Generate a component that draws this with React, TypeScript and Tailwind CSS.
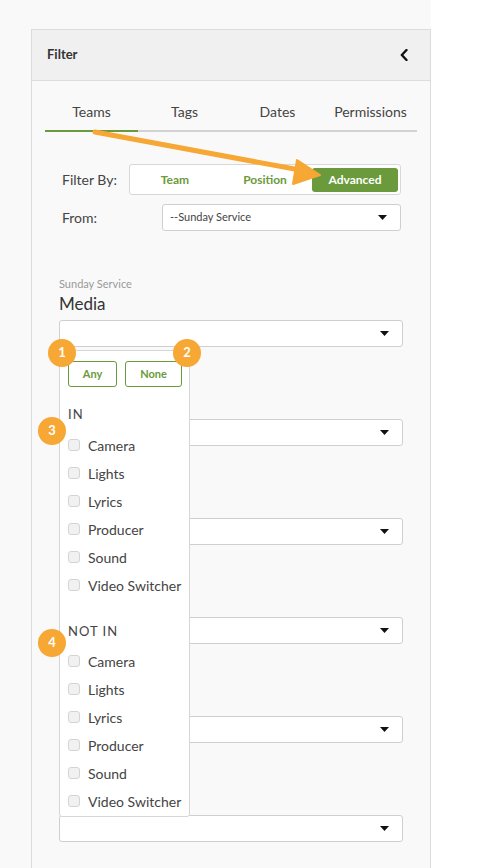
import React from "react";

function Caret() {
  return (
    <svg width="9" height="5" viewBox="0 0 9 5" className="shrink-0">
      <path d="M0 0 L9 0 L4.5 5 Z" fill="#111" />
    </svg>
  );
}

function Select({ text }: { text?: string }) {
  return (
    <div className="flex h-[27px] items-center justify-between rounded-[3px] border border-[#cfcfcf] bg-white pl-[7px] pr-[13px]">
      <span className="text-[11px] text-[#444]">{text ?? ""}</span>
      <Caret />
    </div>
  );
}

function Badge({ n, className }: { n: number; className: string }) {
  return (
    <div
      className={
        "absolute flex h-[28px] w-[28px] items-center justify-center rounded-full bg-[#f6a734] text-[13px] font-bold text-white " +
        className
      }
    >
      {n}
    </div>
  );
}

const ITEMS = ["Camera", "Lights", "Lyrics", "Producer", "Sound", "Video Switcher"];

function CheckList() {
  return (
    <div className="flex flex-col">
      {ITEMS.map((it) => (
        <div key={it} className="flex h-[28px] items-center gap-[8px]">
          <div className="h-[12px] w-[12px] rounded-[3px] border border-[#d4d4d4] bg-[#f1f1f1]" />
          <span className="text-[14px] text-[#444]">{it}</span>
        </div>
      ))}
    </div>
  );
}

function Dropdown() {
  return (
    <div className="absolute left-0 top-[30px] z-10 h-[467px] w-[131px] rounded-b-[3px] border border-[#d6d6d6] bg-white pl-[8px] pt-[10px]">
      <div className="flex gap-[8px]">
        <div className="flex h-[26px] w-[49px] items-center justify-center rounded-[3px] border border-[#6a9a3b] text-[11px] font-bold text-[#6a9a3b]">
          Any
        </div>
        <div className="flex h-[26px] w-[57px] items-center justify-center rounded-[3px] border border-[#6a9a3b] text-[11px] font-bold text-[#6a9a3b]">
          None
        </div>
      </div>
      <div className="mt-[19px] flex h-[18px] items-center text-[13px] tracking-[1px] text-[#444]">IN</div>
      <div className="mt-[7px]">
        <CheckList />
      </div>
      <div className="mt-[24px] flex h-[18px] items-center text-[13px] tracking-[1px] text-[#444]">NOT IN</div>
      <div className="mt-[6px]">
        <CheckList />
      </div>
      <Badge n={1} className="left-[-12px] top-[-12px]" />
      <Badge n={2} className="left-[113px] top-[-12px]" />
      <Badge n={3} className="left-[-22px] top-[66px]" />
      <Badge n={4} className="left-[-22px] top-[278px]" />
    </div>
  );
}

function Group({ withDropdown, covered }: { withDropdown?: boolean; covered?: boolean }) {
  return (
    <div className="mb-[30px] flex flex-col">
      <div className={"h-[12px] text-[11px] leading-[12px] text-[#9a9a9a]" + (covered ? " invisible" : "")}>
        Sunday Service
      </div>
      <div className={"mt-[2px] h-[24px] text-[17px] leading-[24px] text-[#333]" + (covered ? " invisible" : "")}>
        Media
      </div>
      <div className="relative mt-[4px]">
        <Select />
        {withDropdown && <Dropdown />}
      </div>
    </div>
  );
}

export default function App() {
  return (
    <div
      className="relative h-[868px] w-[489px] overflow-hidden bg-white"
      style={{ fontFamily: "Lato, 'Open Sans', sans-serif" }}
    >
      <div className="h-[868px] w-[431px] bg-[#f9f9f9] pl-[31px] pt-[29px]">
        <div className="h-[839px] border-l border-r border-t border-[#dcdcdc] bg-[#f9f9f9]">
          <div className="flex h-[51px] items-center justify-between border-b border-[#dcdcdc] bg-[#f0f0f0] pl-[15px] pr-[22px]">
            <span className="text-[13px] font-bold text-[#333]">Filter</span>
            <svg width="8" height="12" viewBox="0 0 8 12">
              <path d="M6.5 1 L1.8 6 L6.5 11" stroke="#111" strokeWidth="2.4" fill="none" strokeLinecap="round" strokeLinejoin="round" />
            </svg>
          </div>

          <div className="px-[13px] pt-[18px]">
            <div className="grid grid-cols-4 border-b-2 border-[#d2d2d2]">
              <div className="-mb-[2px] border-b-2 border-[#6a9a3b] pb-[6px] text-center text-[14px] leading-[25px] text-[#444]">
                Teams
              </div>
              <div className="pb-[6px] text-center text-[14px] leading-[25px] text-[#444]">Tags</div>
              <div className="pb-[6px] text-center text-[14px] leading-[25px] text-[#444]">Dates</div>
              <div className="pb-[6px] text-center text-[14px] leading-[25px] text-[#444]">Permissions</div>
            </div>
          </div>

          <div className="pl-[30px] pr-[29px] pt-[32px]">
            <div className="flex items-center">
              <span className="w-[67px] text-[14px] text-[#444]">Filter By:</span>
              <div className="flex h-[31px] flex-1 items-center rounded-[3px] border border-[#d8d8d8] bg-white pr-[2px]">
                <div className="w-[90px] text-center text-[12px] font-bold text-[#6a9a3b]">Team</div>
                <div className="w-[90px] text-center text-[12px] font-bold text-[#6a9a3b]">Position</div>
                <div className="ml-[2px] flex h-[24px] flex-1 items-center justify-center rounded-[3px] bg-[#6a9a3b] text-[12px] font-bold text-white">
                  Advanced
                </div>
              </div>
            </div>
            <div className="mt-[9px] flex items-center">
              <span className="w-[100px] text-[14px] text-[#444]">From:</span>
              <div className="flex-1">
                <Select text="--Sunday Service" />
              </div>
            </div>
          </div>

          <div className="pl-[27px] pr-[27px] pt-[47px]">
            <Group withDropdown />
            <Group covered />
            <Group covered />
            <Group covered />
            <Group covered />
            <Group covered />
          </div>
        </div>
      </div>

      <svg className="pointer-events-none absolute left-0 top-0 z-20" width="489" height="868">
        <line x1="95" y1="132" x2="300" y2="170" stroke="#f6a734" strokeWidth="5" strokeLinecap="round" />
        <path d="M320 175 L297 160 L293 184 Z" fill="#f6a734" stroke="#f6a734" strokeWidth="2" strokeLinejoin="round" />
      </svg>
    </div>
  );
}
